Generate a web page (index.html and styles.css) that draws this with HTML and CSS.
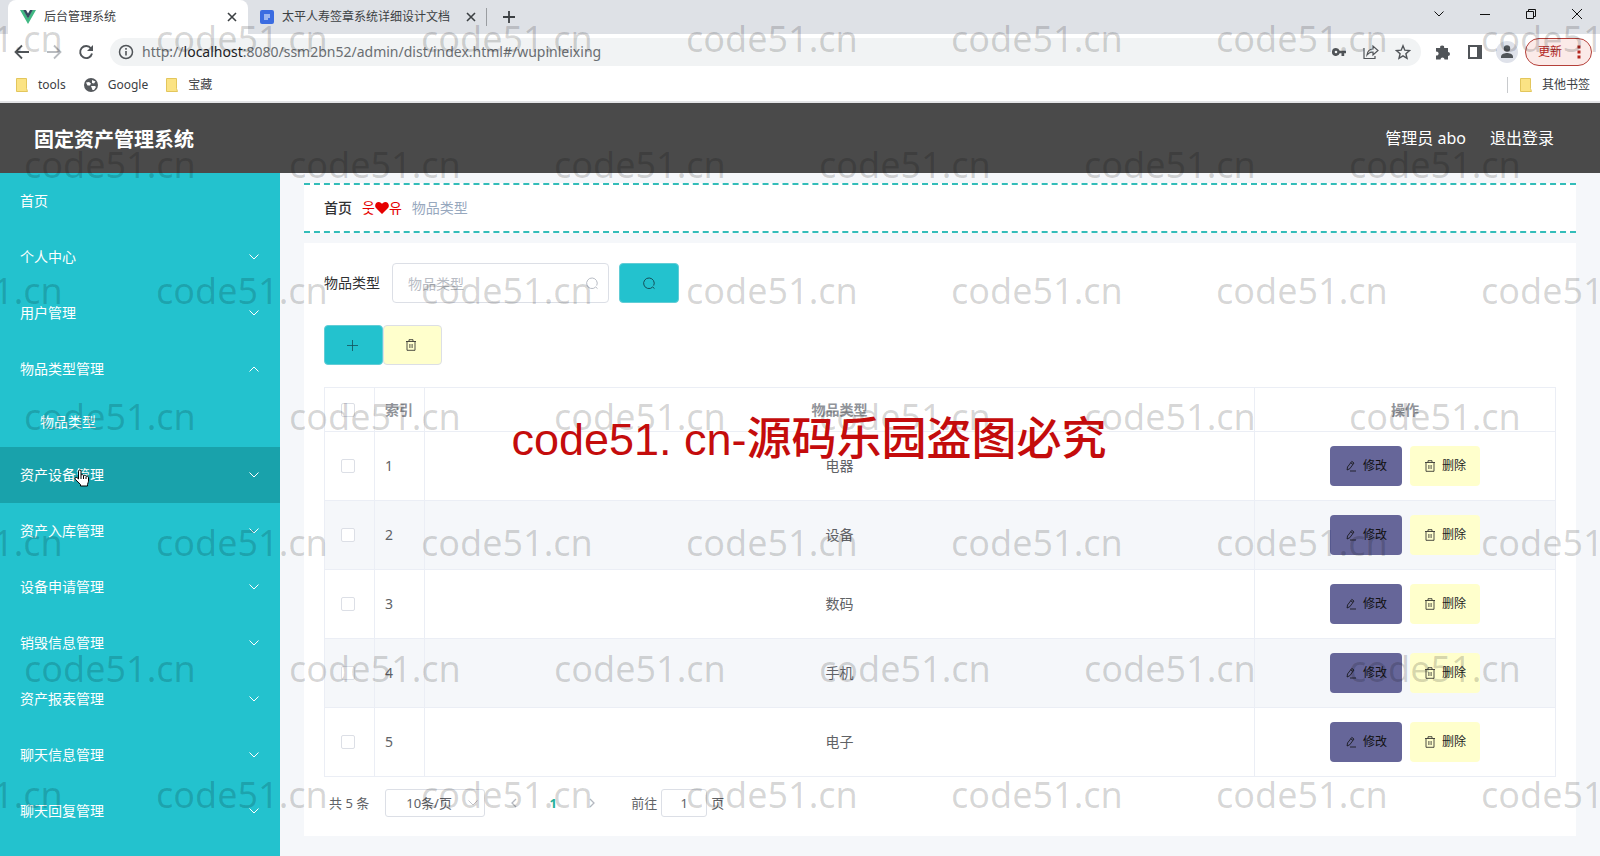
FILE: index.html
```html
<!DOCTYPE html>
<html lang="zh-CN">
<head>
<meta charset="utf-8">
<title>后台管理系统</title>
<link rel="stylesheet" href="styles.css">
</head>
<body>
<svg class="defs" aria-hidden="true">
  <symbol id="down" viewBox="0 0 12 12"><path d="M1.500 3.500l4.500 4.500 4.500-4.500" fill="none" stroke="currentColor"/></symbol>
  <symbol id="up" viewBox="0 0 12 12"><path d="M1.500 8.500l4.500-4.500 4.500 4.500" fill="none" stroke="currentColor"/></symbol>
  <symbol id="close" viewBox="0 0 12 12"><path d="M2 2l8 8M10 2l-8 8" fill="none" stroke="currentColor" stroke-width="1.600"/></symbol>
  <symbol id="search" viewBox="0 0 14 14"><path d="M10.500 11.200A5.300 5.300 0 1 1 11.700 9.600M10.500 10.800l2 1.800" fill="none" stroke="currentColor"/></symbol>
  <symbol id="trash" viewBox="0 0 12 12"><path d="M1 2.500h10M4 2.300V.7h4v1.600M2 2.500v8.800h8V2.500M4.900 5v4M7.100 5v4" fill="none" stroke="currentColor" stroke-width=".8"/></symbol>
  <symbol id="edit" viewBox="0 0 12 12"><path d="M2.500 7L6.800 1.400 9 3 4.800 8.700 2.100 10zM5.700 2.800L8 4.400M5 11h6" fill="none" stroke="currentColor" stroke-width=".8"/></symbol>
  <symbol id="folder" viewBox="0 0 12 14"><path d="M.5.500h10v10l1 3H.5z" fill="#fbe384" stroke="#e3c65c"/></symbol>
</svg>

<div class="tabs">
  <div class="tab current">
    <svg width="16" height="16" viewBox="0 0 16 16"><path d="M0 1h3.500L8 9l4.500-8H16L8 15z" fill="#41b883"/><path d="M3.200 1H6l2 3.500L10 1h2.800L8 9.500z" fill="#35495e"/></svg>
    <span class="tab-name">后台管理系统</span>
    <button class="plain" aria-label="关闭"><svg width="12" height="12"><use href="#close"/></svg></button>
  </div>
  <div class="tab">
    <svg width="14" height="14" viewBox="0 0 14 14"><rect width="14" height="14" rx="2" fill="#3b6ce1"/><path d="M4 5h6M4 7h6M4 9h4" stroke="#fff"/></svg>
    <span class="tab-name">太平人寿签章系统详细设计文档</span>
    <button class="plain" aria-label="关闭"><svg width="12" height="12"><use href="#close"/></svg></button>
  </div>
  <button class="plain new-tab" aria-label="新标签页"><svg width="12" height="12" viewBox="0 0 12 12"><path d="M6 0v12M0 6h12" stroke="currentColor" stroke-width="1.800"/></svg></button>
  <div class="window-buttons">
    <button class="plain" aria-label="搜索标签页"><svg width="12" height="12"><use href="#down"/></svg></button>
    <button class="plain" aria-label="最小化"><svg width="10" height="10" viewBox="0 0 10 10"><path d="M0 5.500h10" stroke="currentColor"/></svg></button>
    <button class="plain" aria-label="还原"><svg width="10" height="10" viewBox="0 0 10 10"><path d="M.5 2.500h7v7h-7zM2.500 2.500v-2h7v7h-2" fill="none" stroke="currentColor"/></svg></button>
    <button class="plain" aria-label="关闭窗口"><svg width="12" height="12" viewBox="0 0 12 12"><path d="M1 1l10 10M11 1L1 11" stroke="currentColor"/></svg></button>
  </div>
</div>

<div class="toolbar">
  <button class="plain" aria-label="后退"><svg width="16" height="16" viewBox="0 0 16 16"><path d="M15 8H2M8 1.500L1.500 8 8 14.500" fill="none" stroke="currentColor" stroke-width="1.800"/></svg></button>
  <button class="plain faded" aria-label="前进"><svg width="16" height="16" viewBox="0 0 16 16"><path d="M1 8h13M8 1.500L14.500 8 8 14.500" fill="none" stroke="currentColor" stroke-width="1.800"/></svg></button>
  <button class="plain" aria-label="刷新"><svg width="16" height="16" viewBox="0 0 16 16"><path d="M13 4.500A6 6 0 1 0 14 9.500" fill="none" stroke="currentColor" stroke-width="1.900"/><path d="M15 1v6H9z" fill="currentColor"/></svg></button>
  <div class="address">
    <svg width="16" height="16" viewBox="0 0 16 16"><circle cx="8" cy="8" r="6.500" fill="none" stroke="currentColor" stroke-width="1.500"/><path d="M8 7v4.500M8 4v1.700" stroke="currentColor" stroke-width="1.600"/></svg>
    <span class="url">http://<b>localhost</b>:8080/ssm2bn52/admin/dist/index.html#/wupinleixing</span>
    <button class="plain" aria-label="密码"><svg width="14" height="14" viewBox="0 0 14 14"><path d="M4 3a4 4 0 1 0 3.700 5.300H9.500V11h2.700V8.300H14V5.700H7.700A4 4 0 0 0 4 3zm0 2.700a1.300 1.300 0 1 1 0 2.600 1.300 1.300 0 0 1 0-2.600z" fill="currentColor" fill-rule="evenodd"/></svg></button>
    <button class="plain" aria-label="分享"><svg width="16" height="16" viewBox="0 0 16 16"><path d="M1 4v10.500h11V12M4 11c.5-4 2.500-6 6-6V2l5 4.500-5 4.500V8C7.500 8 5.500 9 4 11z" fill="none" stroke="currentColor" stroke-width="1.200"/></svg></button>
    <button class="plain" aria-label="收藏"><svg width="16" height="16" viewBox="0 0 16 16"><path d="M8 1.800l1.800 4.400 4.700.4-3.600 3.100 1.100 4.600L8 11.800l-4 2.500 1.100-4.600-3.600-3.100 4.700-.4z" fill="none" stroke="currentColor" stroke-width="1.400"/></svg></button>
  </div>
  <button class="plain" aria-label="扩展程序"><svg width="16" height="16" viewBox="0 0 16 16"><path d="M1 4h4.200a2 2 0 1 1 3.900 0H13v4a2 2 0 1 1 0 4v3.500H9.500a2 2 0 1 0-4 0H1v-4a2 2 0 1 0 0-3.800z" fill="currentColor"/></svg></button>
  <button class="plain" aria-label="侧边栏"><svg width="14" height="14" viewBox="0 0 14 14"><path d="M1 1h12v12H1z" fill="none" stroke="currentColor" stroke-width="2"/><path d="M9 1h4v12H9z" fill="currentColor"/></svg></button>
  <button class="plain" aria-label="用户"><svg width="22" height="22" viewBox="0 0 22 22"><circle cx="11" cy="11" r="11" fill="#dfe2ea"/><circle cx="11" cy="7.500" r="3.200" fill="currentColor"/><path d="M5 17v-1.500c0-2.500 4-3.500 6-3.500s6 1 6 3.500V17z" fill="currentColor"/></svg></button>
  <button class="update">更新<svg width="4" height="14" viewBox="0 0 4 14"><path d="M.5.500h3v3h-3zM.5 5.500h3v3h-3zM.5 10.500h3v3h-3z" fill="currentColor"/></svg></button>
</div>

<div class="bookmarks">
  <a href="#"><svg width="12" height="14"><use href="#folder"/></svg>tools</a>
  <a href="#"><svg width="14" height="14" viewBox="0 0 14 14"><circle cx="7" cy="7" r="7" fill="#55595d"/><path d="M2 4.500l3-.5 2 1.500-1 2H3.500zM8 2l3.500 1.500L10 5.500 8 5zM7 8h4l1 1-2 3H8.500z" fill="#fff"/></svg>Google</a>
  <a href="#"><svg width="12" height="14"><use href="#folder"/></svg>宝藏</a>
  <a href="#" class="others"><svg width="12" height="14"><use href="#folder"/></svg>其他书签</a>
</div>

<header class="header">
  <h1>固定资产管理系统</h1>
  <span class="user">管理员 abo</span>
  <a href="#">退出登录</a>
</header>

<div class="app">
  <nav class="menu">
    <a href="#">首页</a>
    <a href="#">个人中心<svg width="12" height="12"><use href="#down"/></svg></a>
    <a href="#">用户管理<svg width="12" height="12"><use href="#down"/></svg></a>
    <a href="#">物品类型管理<svg width="12" height="12"><use href="#up"/></svg></a>
    <a href="#" class="sub">物品类型</a>
    <a href="#" class="hovered">资产设备管理<svg width="12" height="12"><use href="#down"/></svg>
      <svg class="pointer" width="16" height="18" viewBox="0 0 16 18"><path d="M4.500 10V2.200C4.500.5 7 .5 7 2.200V6c1-.8 2.300-.4 2.500.6 1-.6 2.200-.2 2.500.7 1.200-.5 2.500.1 2.500 1.500v3.400c0 1-.8 2-1 3.300V17H6.500v-1.500L1.300 10.400C.4 9 2 7.700 3.200 8.800z" fill="#fff" stroke="#000"/><path d="M7 6v4M9.500 7v3M12 8v2" stroke="#000"/></svg>
    </a>
    <a href="#">资产入库管理<svg width="12" height="12"><use href="#down"/></svg></a>
    <a href="#">设备申请管理<svg width="12" height="12"><use href="#down"/></svg></a>
    <a href="#">销毁信息管理<svg width="12" height="12"><use href="#down"/></svg></a>
    <a href="#">资产报表管理<svg width="12" height="12"><use href="#down"/></svg></a>
    <a href="#">聊天信息管理<svg width="12" height="12"><use href="#down"/></svg></a>
    <a href="#">聊天回复管理<svg width="12" height="12"><use href="#down"/></svg></a>
  </nav>

  <main class="main">
    <div class="crumbs">
      <a href="#">首页</a>
      <span class="divider">웃<svg width="14" height="12" viewBox="0 0 14 12"><path d="M7 12L1 6C-1 3.500.8 0 3.700 0 5.300 0 6.500 1 7 2c.5-1 1.700-2 3.300-2C13.200 0 15 3.500 13 6z" fill="#e60000"/></svg>유</span>
      <span>物品类型</span>
    </div>

    <section class="card">
      <form class="query">
        <label for="kind">物品类型</label>
        <span class="field"><input id="kind" type="text" placeholder="物品类型"><svg width="14" height="14"><use href="#search"/></svg></span>
        <button type="button" class="button teal" aria-label="查询"><svg width="14" height="14"><use href="#search"/></svg></button>
      </form>
      <div class="actions">
        <button class="button teal" aria-label="新增"><svg width="12" height="12" viewBox="0 0 12 12"><path d="M6.500 1v11M1 6.500h11" stroke="currentColor" stroke-width=".8"/></svg></button>
        <button class="button yellow outlined" aria-label="删除"><svg width="12" height="12"><use href="#trash"/></svg></button>
      </div>

      <table class="list">
        <thead>
          <tr><th class="check"><input type="checkbox" aria-label="全选"></th><th class="index">索引</th><th>物品类型</th><th class="ops">操作</th></tr>
        </thead>
        <tbody>
          <tr><td class="check"><input type="checkbox" aria-label="选择 1"></td><td class="index">1</td><td>电器</td><td><div class="pair"><button class="button purple"><svg width="12" height="12"><use href="#edit"/></svg>修改</button><button class="button yellow"><svg width="12" height="12"><use href="#trash"/></svg>删除</button></div></td></tr>
          <tr><td class="check"><input type="checkbox" aria-label="选择 2"></td><td class="index">2</td><td>设备</td><td><div class="pair"><button class="button purple"><svg width="12" height="12"><use href="#edit"/></svg>修改</button><button class="button yellow"><svg width="12" height="12"><use href="#trash"/></svg>删除</button></div></td></tr>
          <tr><td class="check"><input type="checkbox" aria-label="选择 3"></td><td class="index">3</td><td>数码</td><td><div class="pair"><button class="button purple"><svg width="12" height="12"><use href="#edit"/></svg>修改</button><button class="button yellow"><svg width="12" height="12"><use href="#trash"/></svg>删除</button></div></td></tr>
          <tr><td class="check"><input type="checkbox" aria-label="选择 4"></td><td class="index">4</td><td>手机</td><td><div class="pair"><button class="button purple"><svg width="12" height="12"><use href="#edit"/></svg>修改</button><button class="button yellow"><svg width="12" height="12"><use href="#trash"/></svg>删除</button></div></td></tr>
          <tr><td class="check"><input type="checkbox" aria-label="选择 5"></td><td class="index">5</td><td>电子</td><td><div class="pair"><button class="button purple"><svg width="12" height="12"><use href="#edit"/></svg>修改</button><button class="button yellow"><svg width="12" height="12"><use href="#trash"/></svg>删除</button></div></td></tr>
        </tbody>
      </table>

      <div class="pages">
        <span>共 5 条</span>
        <span class="size"><select aria-label="每页条数"><option>10条/页</option></select><svg width="12" height="12"><use href="#down"/></svg></span>
        <button class="plain" aria-label="上一页"><svg width="10" height="10" viewBox="0 0 10 10"><path d="M7 1L3 5l4 4" fill="none" stroke="currentColor" stroke-width="1.300"/></svg></button>
        <button class="plain number">1</button>
        <button class="plain" aria-label="下一页"><svg width="10" height="10" viewBox="0 0 10 10"><path d="M3 1l4 4-4 4" fill="none" stroke="currentColor" stroke-width="1.300"/></svg></button>
        <label class="jump">前往<input type="text" value="1">页</label>
      </div>
    </section>
  </main>
</div>

<div class="marks" aria-hidden="true">
  <div class="marks-row"><span>code51.cn</span><span>code51.cn</span><span>code51.cn</span><span>code51.cn</span><span>code51.cn</span><span>code51.cn</span><span>code51.cn</span></div>
  <div class="marks-row"><span>code51.cn</span><span>code51.cn</span><span>code51.cn</span><span>code51.cn</span><span>code51.cn</span><span>code51.cn</span></div>
  <div class="marks-row"><span>code51.cn</span><span>code51.cn</span><span>code51.cn</span><span>code51.cn</span><span>code51.cn</span><span>code51.cn</span><span>code51.cn</span></div>
  <div class="marks-row"><span>code51.cn</span><span>code51.cn</span><span>code51.cn</span><span>code51.cn</span><span>code51.cn</span><span>code51.cn</span></div>
  <div class="marks-row"><span>code51.cn</span><span>code51.cn</span><span>code51.cn</span><span>code51.cn</span><span>code51.cn</span><span>code51.cn</span><span>code51.cn</span></div>
  <div class="marks-row"><span>code51.cn</span><span>code51.cn</span><span>code51.cn</span><span>code51.cn</span><span>code51.cn</span><span>code51.cn</span></div>
  <div class="marks-row"><span>code51.cn</span><span>code51.cn</span><span>code51.cn</span><span>code51.cn</span><span>code51.cn</span><span>code51.cn</span><span>code51.cn</span></div>
</div>
<div class="notice">code51. cn-源码乐园盗图必究</div>
</body>
</html>
```

FILE: styles.css
```css
* { box-sizing: border-box; }

body {
  position: relative;
  display: flex;
  flex-direction: column;
  min-height: 100vh;
  margin: 0;
  font: 14px/20px "Noto Sans", "Noto Sans CJK SC", "Noto Sans CJK KR", sans-serif;
  color: #606266;
  background: #f5f7fa;
}

a { color: inherit; text-decoration: none; }
svg { flex: none; }
button, input, select { font: inherit; color: inherit; }
.defs { position: absolute; width: 0; height: 0; }

.plain {
  display: flex;
  align-items: center;
  justify-content: center;
  padding: 0;
  border: 0;
  background: none;
}

/* browser tabs */
.tabs {
  display: flex;
  height: 34px;
  padding-left: 8px;
  background: #dee1e6;
  color: #3c4043;
  font-size: 12px;
}
.tab {
  display: flex;
  align-items: center;
  gap: 8px;
  width: 238px;
  padding: 0 9px 0 12px;
  white-space: nowrap;
}
.tab.current {
  width: 240px;
  padding-right: 10px;
  border-radius: 8px 8px 0 0;
  background: #fff;
}
.tab-name { flex: 1; overflow: hidden; }
.new-tab { width: 44px; border-left: 1px solid #9a9da1; height: 18px; margin-top: 8px; }
.window-buttons { display: flex; height: 28px; margin-left: auto; color: #111; }
.window-buttons .plain { width: 46px; }

/* address row */
.toolbar {
  display: flex;
  align-items: center;
  height: 36px;
  padding: 0 8px 0 6px;
  background: #fff;
  color: #505458;
}
.toolbar .plain { width: 32px; height: 28px; }
.toolbar .faded { color: #b9bcc0; }
.address {
  flex: 1;
  display: flex;
  align-items: center;
  height: 28px;
  margin: 0 6px 0 8px;
  padding: 0 2px 0 8px;
  border-radius: 14px;
  background: #f1f3f4;
}
.url { flex: 1; margin-left: 8px; color: #6a6e72; }
.url b { font-weight: 400; color: #202124; }
.update {
  display: flex;
  align-items: center;
  justify-content: space-between;
  width: 67px;
  height: 28px;
  margin-left: 2px;
  padding: 0 10px 0 12px;
  border: 1px solid #b5403a;
  border-radius: 14px;
  background: #fbeae8;
  color: #b3261e;
  font-size: 12px;
}

.bookmarks {
  display: flex;
  align-items: center;
  gap: 18px;
  height: 33px;
  padding: 0 10px 2px 16px;
  border-bottom: 2px solid #e3e4e6;
  background: #fff;
  color: #3c4043;
  font-size: 12px;
}
.bookmarks a { display: flex; align-items: center; gap: 10px; }
.others { margin-left: auto; padding-left: 12px; border-left: 1px solid #c8cacd; line-height: 16px; }

/* application header */
.header {
  display: flex;
  align-items: center;
  gap: 24px;
  height: 70px;
  padding: 0 46px 0 34px;
  background: #4a4a4a;
  color: #fff;
  font-size: 16px;
}
.header h1 { margin: 0 auto 0 0; padding-top: 3px; font-size: 20px; line-height: 28px; }

.app { flex: 1; display: flex; }

.menu { flex: 0 0 280px; background: #23c2ce; color: #fff; }
.menu a {
  position: relative;
  display: flex;
  align-items: center;
  justify-content: space-between;
  height: 56px;
  padding: 0 20px;
}
.menu .sub { height: 50px; padding-left: 40px; }
.menu .hovered { background: #19a2ab; }
.pointer { position: absolute; left: 74px; top: 22px; }

.main { flex: 1; min-width: 0; padding: 10px 24px 19px; }

.crumbs {
  display: flex;
  align-items: center;
  gap: 10px;
  height: 50px;
  padding: 0 20px;
  border: 2px dashed #33bdb9;
  border-width: 2px 0;
  background: #fff;
  color: #97a8be;
}
.crumbs a { color: #303133; font-weight: 500; }
.divider { display: flex; align-items: center; color: #e60000; }

.card { margin-top: 10px; padding: 20px 20px 19px; background: #fff; }

.query { display: flex; align-items: center; height: 40px; }
.query label { margin-right: 12px; color: #303133; }
.field { position: relative; margin-right: 10px; }
.field input {
  display: block;
  width: 217px;
  height: 40px;
  padding: 0 30px 0 15px;
  border: 1px solid #dcdfe6;
  border-radius: 4px;
  outline: 0;
  background: #fff;
}
.field input::placeholder { color: #b8bcc4; }
.field svg { position: absolute; right: 10px; top: 13px; color: #b8bcc4; }

.button {
  display: flex;
  align-items: center;
  justify-content: center;
  gap: 6px;
  height: 40px;
  padding: 0;
  border: 1px solid transparent;
  border-radius: 4px;
  color: #222;
  font-size: 12px;
}
.teal { width: 60px; background: #23c2ce; color: #14505a; border-color: #62cdd6; }
.yellow { width: 70px; background: #ffffcc; }
.purple { width: 72px; background: #666699; color: #111; }
.outlined { width: 59px; padding-right: 4px; border-color: #dcdfe6; }

.actions { display: flex; margin: 22px 0; }
.actions .teal { width: 59px; padding-right: 4px; }

.list {
  width: 100%;
  border: 1px solid #ebeef5;
  border-width: 1px 0 0 1px;
  border-spacing: 0;
  table-layout: fixed;
}
.list th, .list td {
  height: 69px;
  padding: 0 10px;
  border: 1px solid #ebeef5;
  border-width: 0 1px 1px 0;
  text-align: center;
}
.list th { height: 44px; color: #909399; font-weight: 700; }
.list tbody tr:nth-child(even) { background: #f5f7fa; }
.list .check { width: 50px; padding-right: 14px; }
.list .index { width: 50px; padding-right: 0; text-align: left; white-space: nowrap; }
.list .ops { width: 301px; }
.list input {
  display: block;
  width: 14px;
  height: 14px;
  margin: 0 auto;
  appearance: none;
  border: 1px solid #dcdfe6;
  border-radius: 2px;
  background: #fff;
}
.pair { display: flex; justify-content: center; gap: 8px; }

.pages { display: flex; align-items: center; height: 28px; margin-top: 12px; padding-left: 5px; font-size: 13px; }
.size { position: relative; margin: 0 14px 0 16px; }
.size select {
  display: block;
  width: 100px;
  height: 28px;
  padding: 0 20px;
  appearance: none;
  border: 1px solid #dcdfe6;
  border-radius: 3px;
  background: #fff;
}
.size svg { position: absolute; right: 6px; top: 8px; color: #c0c4cc; }
.pages .plain { width: 30px; height: 28px; color: #b4b8c0; }
.pages .number { width: 48px; color: #25b09b; font-weight: 700; }
.jump { display: flex; align-items: center; margin-left: 24px; }
.jump input {
  width: 46px;
  height: 28px;
  margin: 0 4px;
  padding: 0;
  border: 1px solid #dcdfe6;
  border-radius: 3px;
  background: #fff;
  text-align: center;
}

/* repeated watermark over the whole window */
.marks { position: absolute; inset: -24px 0 0; overflow: hidden; pointer-events: none; }
.marks-row {
  display: flex;
  margin-left: 24px;
  color: rgba(0, 0, 0, .16);
  font-size: 36px;
  line-height: 126px;
}
.marks-row:nth-child(odd) { margin-left: -109px; }
.marks-row span { flex: 0 0 265px; }

.notice {
  position: absolute;
  top: 408px;
  left: 0;
  right: 0;
  padding-left: 18px;
  color: #c40c0c;
  font: 500 45px/64px "Liberation Sans", "Noto Sans CJK SC", sans-serif;
  text-align: center;
  pointer-events: none;
}
```
